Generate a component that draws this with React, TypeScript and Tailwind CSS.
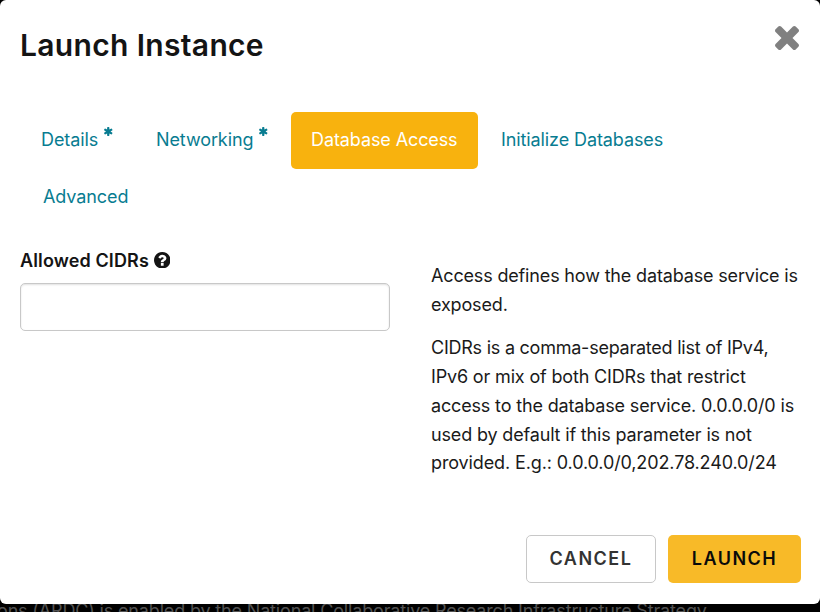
import type { ReactNode } from 'react';

const ASTERISK =
  'M1546 1050q46 26 59.500 77.500t-12.500 97.500l-64 110q-26 46-77.500 59.500t-97.500-12.500l-266-153v307q0 52-38 90t-90 38h-128q-52 0-90-38t-38-90v-307l-266 153q-46 26-97.500 12.500t-77.500-59.500l-64-110q-26-46-12.500-97.500t59.500-77.500l266-154-266-154q-46-26-59.500-77.500t12.500-97.500l64-110q26-46 77.500-59.500t97.500 12.500l266 153v-307q0-52 38-90t90-38h128q52 0 90 38t38 90v307l266-153q46-26 97.500-12.500t77.500 59.500l64 110q26 46 12.500 97.500t-59.500 77.500l-266 154z';
const CROSS =
  'M1298 1322q0 40-28 68l-136 136q-28 28-68 28t-68-28l-294-294-294 294q-28 28-68 28t-68-28l-136-136q-28-28-28-68t28-68l294-294-294-294q-28-28-28-68t28-68l136-136q28-28 68-28t68 28l294 294 294-294q28-28 68-28t68 28l136 136q28 28 28 68t-28 68l-294 294 294 294q28 28 28 68z';
const HELP =
  'M1024 1376v-192q0-14-9-23t-23-9h-192q-14 0-23 9t-9 23v192q0 14 9 23t23 9h192q14 0 23-9t9-23zm256-672q0-88-55.500-163t-138.500-116-170-41q-243 0-371 213-15 24 8 42l132 100q7 6 19 6 16 0 25-12 53-68 86-92 34-24 86-24 48 0 85.500 26t37.500 59q0 38-20 61t-68 45q-63 28-115.500 86.500t-52.500 125.500v36q0 14 9 23t23 9h192q14 0 23-9t9-23q0-19 21.500-49.500t54.500-49.500q32-18 49-28.500t46-35 44.500-48 28-60.500 12.500-81zm384 192q0 209-103 385.500t-279.500 279.500-385.500 103-385.500-103-279.500-279.500-103-385.500 103-385.500 279.500-279.500 385.500-103 385.500 103 279.500 279.500 103 385.500z';

function Tab({ children, required, className }: { children: ReactNode; required?: boolean; className: string }) {
  return (
    <a className={`flex h-[57px] items-center rounded-[5px] pb-[2px] tracking-[-0.1px] whitespace-nowrap ${className}`}>
      {children}
      {required && (
        <svg viewBox="174 128 1444 1536" className="mb-[16px] ml-[6px] h-[9px] w-[8.5px] fill-current">
          <path d={ASTERISK} />
        </svg>
      )}
    </a>
  );
}

export default function App() {
  return (
    <div className="h-[612px] w-[820px] overflow-hidden bg-black font-['Inter','Liberation_Sans',sans-serif] text-[18px] tracking-[-0.16px] text-[#1a1a1a]">
      <div className="relative z-10 flex h-[604px] flex-col rounded-[6px] bg-white">
        <header className="flex items-start justify-between pt-[26px] pr-[21px] pl-5">
          <h4 className="text-[30px] leading-[38px] font-semibold tracking-[0.33px] text-[#141414]">Launch Instance</h4>
          <button aria-label="Close">
            <svg viewBox="110 366 1188 1188" className="h-6 w-6 fill-[#808080]">
              <path d={CROSS} />
            </svg>
          </button>
        </header>

        <nav className="mt-12 flex flex-wrap text-[#087c91]">
          <Tab className="ml-[41px] w-[115px]" required>Details</Tab>
          <Tab className="w-[135px]" required>Networking</Tab>
          <Tab className="w-[187px] bg-[#f8b20e] pl-[20px] text-white">Database Access</Tab>
          <Tab className="w-[300px] pl-[23px]">Initialize Databases</Tab>
          <Tab className="ml-[43px]">Advanced</Tab>
        </nav>

        <main className="mt-[22px] flex flex-1">
          <div className="w-[431px] pl-5">
            <label className="flex h-6 items-center font-semibold tracking-[0.12px] text-[#141414]">
              Allowed CIDRs
              <svg viewBox="128 128 1536 1536" className="ml-[5px] h-[16.5px] w-[16.5px] fill-current">
                <path d={HELP} />
              </svg>
            </label>
            <input className="mt-[11px] block h-12 w-[370px] rounded-[5px] border border-[#c8c8c8] bg-white px-3 shadow-[inset_0_1px_2px_rgba(0,0,0,0.12)] outline-none" />
          </div>
          <div className="pt-[14px] leading-[28.7px] whitespace-nowrap">
            <p>
              Access defines how the database service is
              <br />
              exposed.
            </p>
            <p className="mt-[15px]">
              <span className="tracking-[-0.24px]">CIDRs is a comma-separated list of IPv4,</span>
              <br />
              IPv6 or mix of both CIDRs that restrict
              <br />
              access to the database service. 0.0.0.0/0 is
              <br />
              used by default if this parameter is not
              <br />
              <span className="tracking-[-0.12px]">provided. E.g.: 0.0.0.0/0,202.78.240.0/24</span>
            </p>
          </div>
        </main>

        <footer className="flex justify-end gap-3 pr-[19px] pb-[21px] font-semibold">
          <button className="h-12 w-[130px] rounded-[5px] border border-[#c8c8c8] pb-[2px] tracking-[1.5px] text-[#333]">CANCEL</button>
          <button className="h-12 w-[133px] rounded-[5px] bg-[#f8ba28] pb-[2px] tracking-[1.5px] text-[#0a0a0a]">LAUNCH</button>
        </footer>
      </div>
      <div className="-mt-[4px] ml-[-3px] leading-[22px] whitespace-nowrap text-[#525252]">
        ons (ARDC) is enabled by the National Collaborative Research Infrastructure Strategy
      </div>
    </div>
  );
}
